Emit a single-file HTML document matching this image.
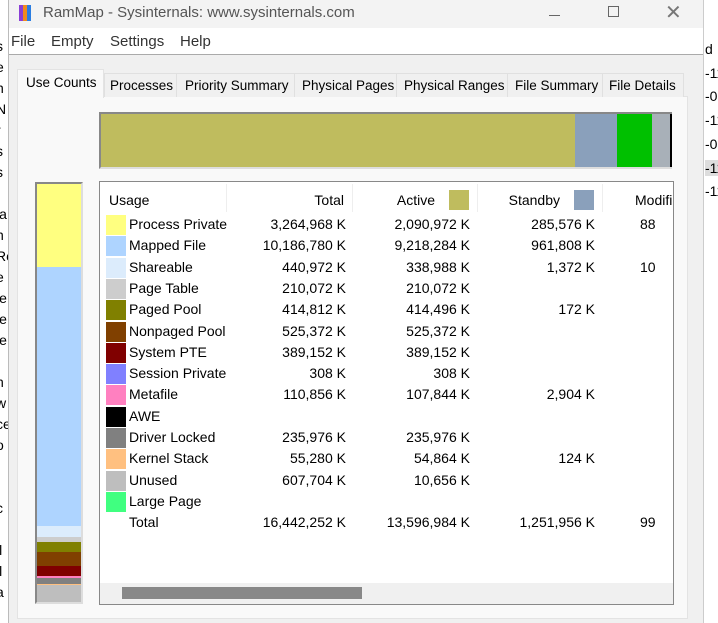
<!DOCTYPE html>
<html><head><style>
*{margin:0;padding:0;box-sizing:border-box}
body{width:718px;height:623px;overflow:hidden;background:#f0f0f0;font-family:"Liberation Sans",sans-serif;font-size:14px;color:#000;position:relative}
.a{position:absolute}
.tb{font-size:13.5px}
.row{position:absolute;left:0;height:21px;line-height:21px;width:573px}
.row span{position:absolute;top:0}
.sw{position:absolute;left:6px;top:1px;width:20px;height:20px}
.n{left:29px}
.t{right:327px}.ac{right:203px}.s{right:78px}.m{left:540px}
</style></head><body>
<div class="a" style="left:703px;top:0;width:15px;height:623px;background:#fff;border-left:1px solid #ccc"></div>
<div class="a" style="left:705px;top:38px;font-size:14px;line-height:23.7px;width:20px;color:#000">d<br>-11<br>-01<br>-11<br>-08<br><span style="background:#ddd">-11</span><br>-11</div>
<div class="a" style="left:0;top:0;width:9px;height:623px;background:#fff;border-right:1px solid #bbb;overflow:hidden;font-size:14px;line-height:21px">
<div style="margin-top:36px;margin-left:-4px">s<br>e<br>n<br>N<br>r<br>s<br>s<br><br>la<br>n<br>Re<br>e<br>le<br>le<br>le<br><br>h<br>w<br>ce<br>o<br><br><br>c<br><br>il<br>il<br>a</div></div>
<div class="a" style="left:9px;top:0;width:694px;height:623px;background:#f0f0f0"></div>
<div class="a" style="left:9px;top:0;width:694px;height:28px;background:#f3f3f3"></div>
<div class="a" style="left:19px;top:5px;width:4px;height:16px;background:#8a3fd6"></div>
<div class="a" style="left:23px;top:5px;width:4px;height:16px;background:#f08a1c"></div>
<div class="a" style="left:27px;top:5px;width:4px;height:16px;background:#2a7de1"></div>
<div class="a" style="left:43px;top:4px;font-size:15px;color:#555">RamMap - Sysinternals: www.sysinternals.com</div>
<div class="a" style="left:549px;top:15px;width:11px;height:1px;background:#666"></div>
<div class="a" style="left:608px;top:6px;width:11px;height:11px;border:1px solid #666"></div>
<div class="a" style="left:665px;top:0;font-size:20px;color:#777">✕</div>
<div class="a" style="left:9px;top:28px;width:694px;height:27px;background:#fff;border-bottom:1px solid #aaa"></div>
<div class="a" style="left:11px;top:33px;font-size:15px;color:#333">File</div>
<div class="a" style="left:51px;top:33px;font-size:15px;color:#333">Empty</div>
<div class="a" style="left:110px;top:33px;font-size:15px;color:#333">Settings</div>
<div class="a" style="left:180px;top:33px;font-size:15px;color:#333">Help</div>
<div class="a" style="left:17px;top:96px;width:671px;height:523px;background:#f9f9f9;border:1px solid #e3e3e3"></div>
<div class="a" style="left:104px;top:73px;width:580px;height:24px;background:#f0f0f0;border:1px solid #e0e0e0;border-bottom:none"></div>
<div class="a" style="left:17px;top:69px;width:87px;height:29px;background:#f9f9f9;border:1px solid #e3e3e3;border-bottom:none"></div>
<div class="a tb" style="left:26px;top:75px">Use Counts</div>
<div class="a tb" style="left:110px;top:78px">Processes</div>
<div class="a" style="left:176px;top:73px;width:1px;height:24px;background:#e0e0e0"></div>
<div class="a tb" style="left:185px;top:78px">Priority Summary</div>
<div class="a" style="left:294px;top:73px;width:1px;height:24px;background:#e0e0e0"></div>
<div class="a tb" style="left:302px;top:78px">Physical Pages</div>
<div class="a" style="left:396px;top:73px;width:1px;height:24px;background:#e0e0e0"></div>
<div class="a tb" style="left:404px;top:78px">Physical Ranges</div>
<div class="a" style="left:507px;top:73px;width:1px;height:24px;background:#e0e0e0"></div>
<div class="a tb" style="left:515px;top:78px">File Summary</div>
<div class="a" style="left:602px;top:73px;width:1px;height:24px;background:#e0e0e0"></div>
<div class="a tb" style="left:609px;top:78px">File Details</div>
<div class="a" style="left:99px;top:112px;width:573px;height:57px;border:2px solid #888;border-right:none;border-bottom-color:#ddd;display:flex">
<div style="width:474px;background:#bfbc5e"></div><div style="width:42px;background:#8aa0bb"></div><div style="width:35px;background:#00c000"></div><div style="width:18px;background:#a8b0b8"></div><div style="width:2px;background:#000"></div></div>
<div class="a" style="left:35px;top:182px;width:48px;height:422px;border:2px solid #888;border-right-color:#ddd;border-bottom-color:#ddd;background:#bebebe">
<div style="height:83px;background:#ffff80"></div><div style="height:259px;background:#aed4ff"></div><div style="height:11px;background:#dcecfc"></div><div style="height:5px;background:#cdcdcd"></div><div style="height:10px;background:#808000"></div><div style="height:14px;background:#804000"></div><div style="height:10px;background:#800000"></div><div style="height:2px;background:#ff80c0"></div><div style="height:6px;background:#808080"></div><div style="height:1px;background:#ffc080"></div></div>
<div class="a" style="left:99px;top:181px;width:575px;height:424px;background:#fff;border:1px solid #888;overflow:hidden">
<div class="a" style="left:9px;top:10px">Usage</div>
<div class="a" style="left:126px;top:2px;width:1px;height:28px;background:#eee"></div>
<div class="a" style="right:329px;top:10px">Total</div>
<div class="a" style="left:252px;top:2px;width:1px;height:28px;background:#eee"></div>
<div class="a" style="right:238px;top:10px">Active</div>
<div class="a" style="left:349px;top:8px;width:20px;height:20px;background:#bfbc5e"></div>
<div class="a" style="left:377px;top:2px;width:1px;height:28px;background:#eee"></div>
<div class="a" style="right:113px;top:10px">Standby</div>
<div class="a" style="left:474px;top:8px;width:20px;height:20px;background:#8aa0bb"></div>
<div class="a" style="left:502px;top:2px;width:1px;height:28px;background:#eee"></div>
<div class="a" style="left:535px;top:10px">Modified</div>
<div class="a" style="left:0;top:32px;width:575px">
<div class="row" style="top:0"><i class="sw" style="background:#ffff80"></i><span class="n">Process Private</span><span class="t">3,264,968 K</span><span class="ac">2,090,972 K</span><span class="s">285,576 K</span><span class="m">88</span></div>
<div class="row" style="top:21.3px"><i class="sw" style="background:#aed4ff"></i><span class="n">Mapped File</span><span class="t">10,186,780 K</span><span class="ac">9,218,284 K</span><span class="s">961,808 K</span></div>
<div class="row" style="top:42.6px"><i class="sw" style="background:#dcecfc"></i><span class="n">Shareable</span><span class="t">440,972 K</span><span class="ac">338,988 K</span><span class="s">1,372 K</span><span class="m">10</span></div>
<div class="row" style="top:63.9px"><i class="sw" style="background:#cdcdcd"></i><span class="n">Page Table</span><span class="t">210,072 K</span><span class="ac">210,072 K</span></div>
<div class="row" style="top:85.2px"><i class="sw" style="background:#808000"></i><span class="n">Paged Pool</span><span class="t">414,812 K</span><span class="ac">414,496 K</span><span class="s">172 K</span></div>
<div class="row" style="top:106.5px"><i class="sw" style="background:#804000"></i><span class="n">Nonpaged Pool</span><span class="t">525,372 K</span><span class="ac">525,372 K</span></div>
<div class="row" style="top:127.8px"><i class="sw" style="background:#800000"></i><span class="n">System PTE</span><span class="t">389,152 K</span><span class="ac">389,152 K</span></div>
<div class="row" style="top:149.1px"><i class="sw" style="background:#8080ff"></i><span class="n">Session Private</span><span class="t">308 K</span><span class="ac">308 K</span></div>
<div class="row" style="top:170.4px"><i class="sw" style="background:#ff80c0"></i><span class="n">Metafile</span><span class="t">110,856 K</span><span class="ac">107,844 K</span><span class="s">2,904 K</span></div>
<div class="row" style="top:191.7px"><i class="sw" style="background:#000"></i><span class="n">AWE</span></div>
<div class="row" style="top:213px"><i class="sw" style="background:#808080"></i><span class="n">Driver Locked</span><span class="t">235,976 K</span><span class="ac">235,976 K</span></div>
<div class="row" style="top:234.3px"><i class="sw" style="background:#ffc080"></i><span class="n">Kernel Stack</span><span class="t">55,280 K</span><span class="ac">54,864 K</span><span class="s">124 K</span></div>
<div class="row" style="top:255.6px"><i class="sw" style="background:#bebebe"></i><span class="n">Unused</span><span class="t">607,704 K</span><span class="ac">10,656 K</span></div>
<div class="row" style="top:276.9px"><i class="sw" style="background:#40ff80"></i><span class="n">Large Page</span></div>
<div class="row" style="top:298.2px"><span class="n">Total</span><span class="t">16,442,252 K</span><span class="ac">13,596,984 K</span><span class="s">1,251,956 K</span><span class="m">99</span></div>
</div>
<div class="a" style="left:0;top:401px;width:575px;height:22px;background:#f0f0f0"></div>
<div class="a" style="left:22px;top:405px;width:240px;height:12px;background:#888"></div>
</div>
</body></html>
